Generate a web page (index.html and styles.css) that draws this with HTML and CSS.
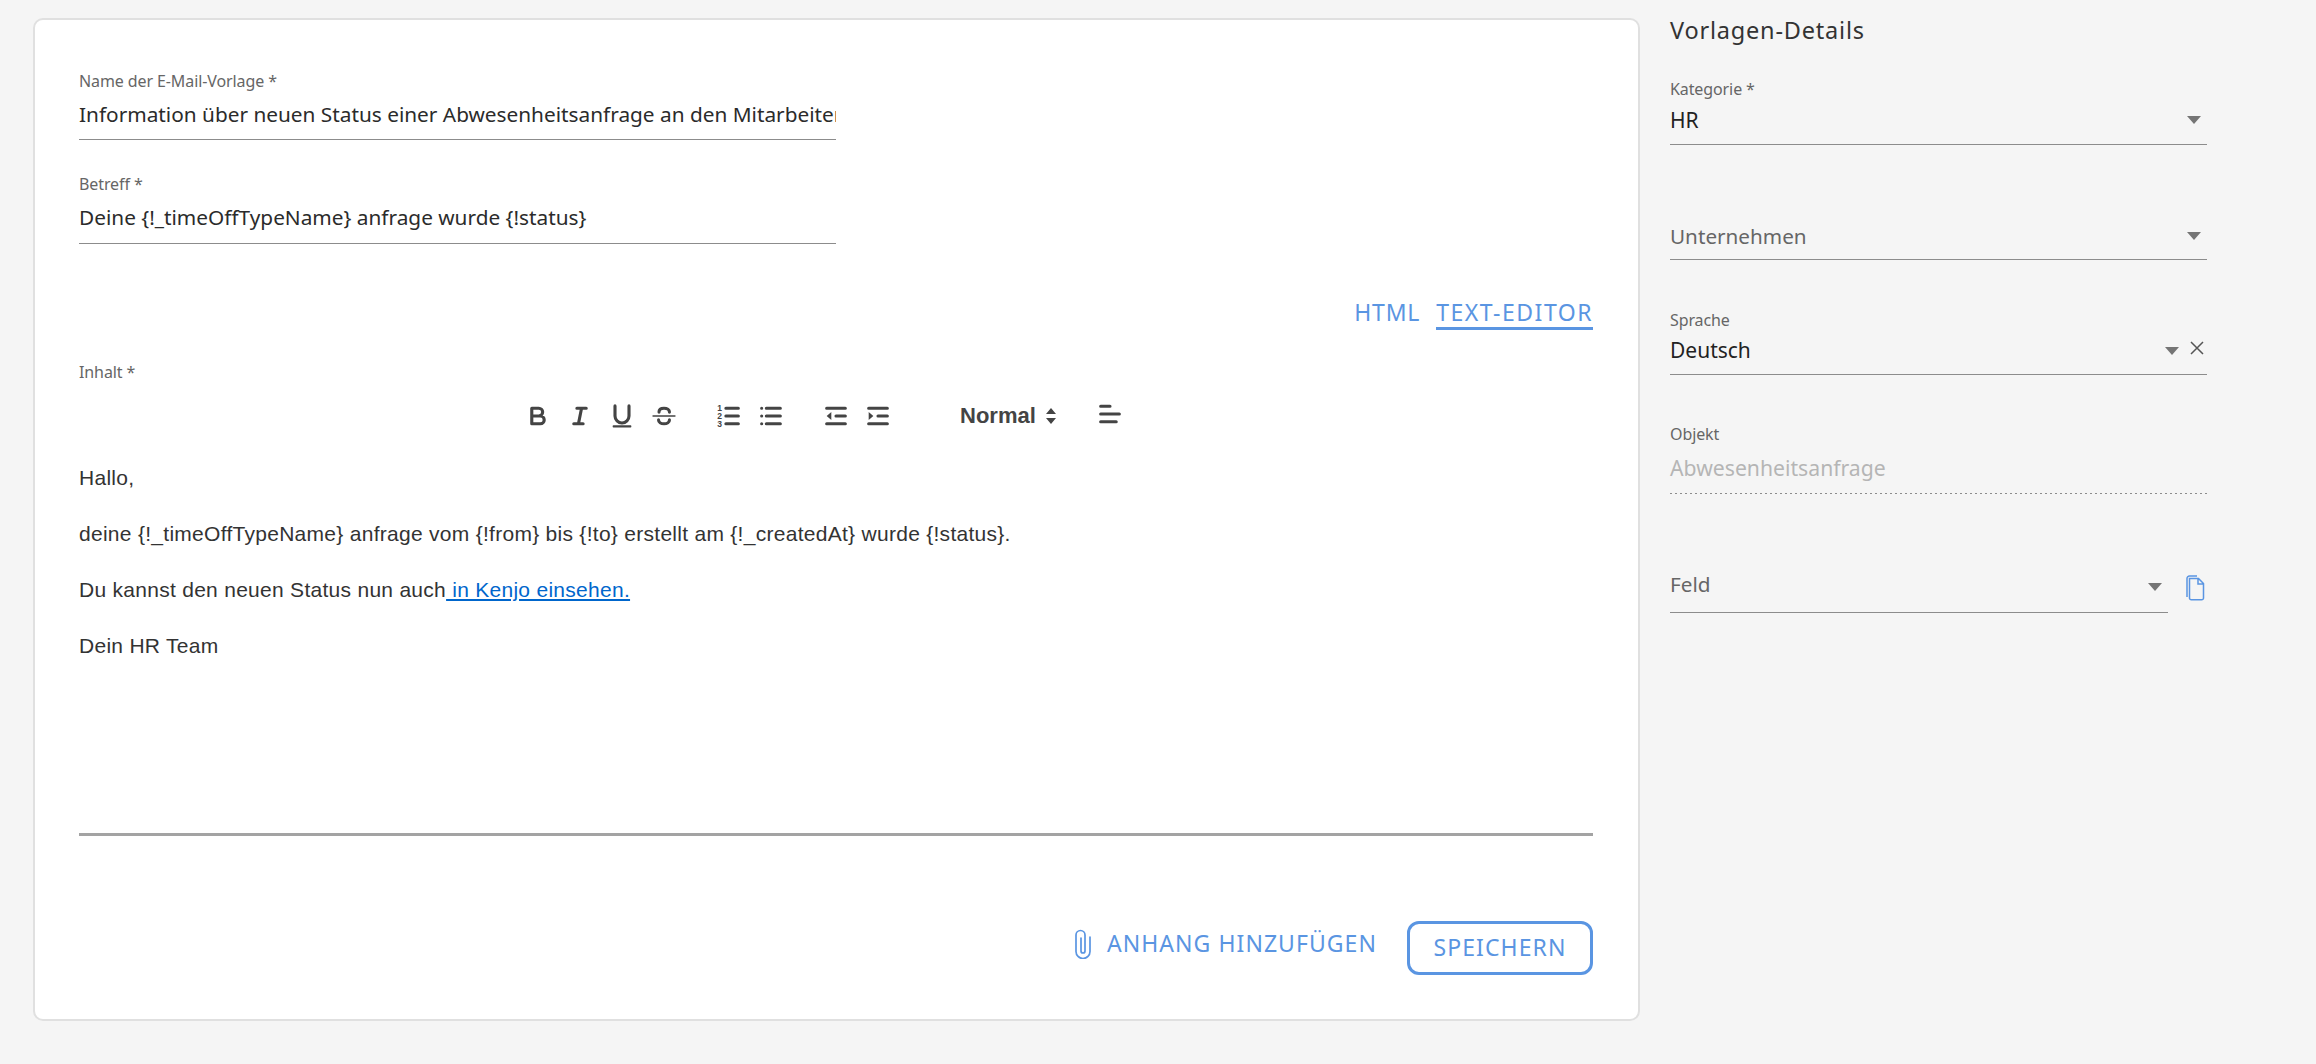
FILE: index.html
```html
<!DOCTYPE html>
<html lang="de">
<head>
<meta charset="utf-8">
<title>E-Mail-Vorlage</title>
<link rel="stylesheet" href="styles.css">
</head>
<body>
<main class="page">
  <section class="card">
    <div class="field field-name">
      <div class="label">Name der E-Mail-Vorlage *</div>
      <div class="value">Information über neuen Status einer Abwesenheitsanfrage an den Mitarbeiter</div>
    </div>
    <div class="field field-subject">
      <div class="label">Betreff *</div>
      <div class="value">Deine {!_timeOffTypeName} anfrage wurde {!status}</div>
    </div>
    <div class="tabs">
      <span class="tab tab-html">HTML</span>
      <span class="tab tab-active">TEXT-EDITOR</span>
    </div>
    <div class="label label-content">Inhalt *</div>
    <div class="toolbar">
      <div class="tool-group">
        <span class="tool"><svg viewBox="0 0 18 18"><path d="M5 4h4.500a2.500 2.500 0 0 1 0 5H5zM5 9h5.500a2.500 2.500 0 0 1 0 5H5z"/></svg></span>
        <span class="tool"><svg viewBox="0 0 18 18"><path d="M7 4h6M5 14h6M8 14l2-10"/></svg></span>
        <span class="tool"><svg viewBox="0 0 18 18"><path d="M4.500 2.500V9a4.500 4.500 0 0 0 9 0V2.500"/><rect class="fill" x="3" y="15" width="12" height="1.400" rx=".5"/></svg></span>
        <span class="tool"><svg viewBox="0 0 18 18"><path d="M12.500 6.500C12.500 5 11 4 9 4S5.800 5 5.800 6.500M5.500 11.500C5.500 13 7 14 9 14s3.500-1 3.500-2.500"/><path class="thin" d="M2 9h14"/></svg></span>
      </div>
      <div class="tool-group">
        <span class="tool"><svg viewBox="0 0 18 18"><path d="M7 4h8M7 9h8M7 14h8"/><text class="num" x="1.500" y="6">1</text><text class="num" x="1.500" y="11">2</text><text class="num" x="1.500" y="16">3</text></svg></span>
        <span class="tool"><svg viewBox="0 0 18 18"><path d="M6 4h9M6 9h9M6 14h9M3 4h0M3 9h0M3 14h0"/></svg></span>
      </div>
      <div class="tool-group">
        <span class="tool"><svg viewBox="0 0 18 18"><path d="M3 14h12M3 4h12M9 9h6"/><polygon class="fill" points="6 6.500 6 11.500 3 9"/></svg></span>
        <span class="tool"><svg viewBox="0 0 18 18"><path d="M3 14h12M3 4h12M9 9h6"/><polygon class="fill" points="3 6.500 3 11.500 6 9"/></svg></span>
      </div>
      <div class="format">
        <span>Normal</span>
        <svg class="format-arrows" viewBox="0 0 10 16"><path d="M5 0l5 6H0zM5 16l5-6H0z"/></svg>
      </div>
      <span class="tool tool-align"><svg viewBox="0 0 18 18"><path d="M3 4h6M3 9h12M3 14h10"/></svg></span>
    </div>
    <div class="editor">
      <p>Hallo,</p>
      <p>deine {!_timeOffTypeName} anfrage vom {!from} bis {!to} erstellt am {!_createdAt} wurde {!status}.</p>
      <p>Du kannst den neuen Status nun auch<a class="link" href="#"> in Kenjo einsehen.</a></p>
      <p>Dein HR Team</p>
    </div>
    <div class="actions">
      <span class="attach">
        <svg class="clip" viewBox="0 0 16 30"><path d="M15 8v14.500a7 7 0 0 1-14 0V6a4.500 4.500 0 0 1 9 0v16a2 2 0 0 1-4 0V9"/></svg>
        ANHANG HINZUFÜGEN
      </span>
      <span class="save">SPEICHERN</span>
    </div>
  </section>

  <aside class="side">
    <h2 class="side-title">Vorlagen-Details</h2>
    <div class="select sel-cat">
      <div class="label">Kategorie *</div>
      <div class="sel-row"><span class="value-plain">HR</span><i class="arrow"></i></div>
    </div>
    <div class="select sel-company">
      <div class="sel-row"><span class="placeholder">Unternehmen</span><i class="arrow"></i></div>
    </div>
    <div class="select sel-lang">
      <div class="label">Sprache</div>
      <div class="sel-row"><span class="value-plain">Deutsch</span><i class="arrow arrow-clear"></i>
        <svg class="clear" viewBox="0 0 16 14"><path d="M2 1l12 12M14 1L2 13"/></svg></div>
    </div>
    <div class="select-dotted sel-object">
      <div class="label">Objekt</div>
      <div class="sel-row"><span class="disabled">Abwesenheitsanfrage</span></div>
    </div>
    <div class="field-line">
      <div class="select sel-field">
        <div class="sel-row"><span class="placeholder">Feld</span><i class="arrow arrow-low"></i></div>
      </div>
      <svg class="copy" viewBox="0 0 21 26"><path d="M3 22V3.500A2.500 2.500 0 0 1 5.500 1H13"/><path d="M5.500 3.500h9l5 5V23a1.800 1.800 0 0 1-1.800 1.800H7.300A1.800 1.800 0 0 1 5.500 23zM14 3.500V9h5.500"/></svg>
    </div>
  </aside>
</main>
</body>
</html>
```

FILE: styles.css
```css
* { box-sizing: border-box; }
html, body { margin: 0; height: 100%; }
body {
  background: #f5f5f5;
  font-family: "Noto Sans", "Open Sans", sans-serif;
  color: #2b2b2b;
  overflow: hidden;
}
.page { display: flex; align-items: flex-start; height: 1064px; }

.card {
  width: 1607px;
  height: 1003px;
  margin: 18px 0 0 33px;
  padding: 0 45px 0 44px;
  background: #fff;
  border: 2px solid #e0e0e0;
  border-radius: 10px;
  display: flex;
  flex-direction: column;
}

.label { font-size: 16px; line-height: 20px; color: #666; letter-spacing: -.1px; }
.value {
  font-size: 20.800px;
  line-height: 28px;
  white-space: nowrap;
  overflow: hidden;
  color: #2b2b2b;
  margin-top: 9px;
}
.field {
  width: 757px;
  height: 70px;
  border-bottom: 1px solid #8c8c8c;
}
.field-name { margin-top: 51px; height: 69px; }
.field-subject { margin-top: 34px; }

.tabs { display: flex; justify-content: flex-end; gap: 16px; margin-top: 53px; height: 33px; }
.tab { font-size: 23px; line-height: 30px; color: #5a95e2; letter-spacing: 1.500px; }
.tab-html { letter-spacing: .8px; }
.tab-active { border-bottom: 3px solid #5a95e2; }

.label-content { margin-top: 32px; }

.toolbar { display: flex; align-items: center; height: 36px; margin: 16px 0 0 438px; }
.tool-group { display: flex; margin-right: 23px; }
.tool { display: flex; align-items: center; justify-content: center; width: 42px; height: 36px; }
.tool svg { display: block; width: 28px; height: 28px; }
.tool svg path {
  fill: none;
  stroke: #444;
  stroke-width: 2;
  stroke-linecap: round;
  stroke-linejoin: round;
}
.tool svg path.thin { stroke-width: 1; }
.tool svg .fill { fill: #444; stroke: none; }
.tool svg .num { font-family: "Liberation Sans", sans-serif; font-size: 5.500px; font-weight: 700; fill: #444; }
.format {
  display: flex;
  align-items: center;
  gap: 10px;
  margin-left: 38px;
  width: 129px;
  font-family: "Liberation Sans", sans-serif;
  font-weight: 700;
  font-size: 22px;
  color: #444;
}
.format-arrows { width: 10px; height: 16px; fill: #444; }
.tool-align { margin-top: -5px; }

.editor {
  height: 372px;
  margin-top: 30px;
  border-bottom: 3px solid #a3a3a3;
  font-family: "Liberation Sans", sans-serif;
  font-size: 21px;
  line-height: 28px;
  letter-spacing: .28px;
  color: #333;
}
.editor p { margin: 0 0 28px; }
.link { color: #06c; text-decoration: underline; }

.actions { display: flex; justify-content: flex-end; align-items: flex-start; margin-top: 85px; }
.attach {
  display: flex;
  align-items: center;
  gap: 16px;
  height: 44px;
  margin-right: 30px;
  font-size: 23px;
  letter-spacing: 1.050px;
  color: #5a95e2;
}
.clip { width: 16px; height: 30px; fill: none; stroke: #5a95e2; stroke-width: 1.700; stroke-linecap: round; margin-top: 2px; }
.save {
  display: flex;
  align-items: center;
  justify-content: center;
  width: 186px;
  height: 54px;
  padding-bottom: 2px;
  border: 3px solid #5a95e2;
  border-radius: 12px;
  font-size: 23px;
  letter-spacing: 1.100px;
  color: #5a95e2;
}

.side { width: 537px; margin-left: 30px; }
.side-title { margin: 14px 0 0; font-size: 23.500px; line-height: 32px; font-weight: 400; letter-spacing: .8px; color: #333; }
.select { border-bottom: 1px solid #8c8c8c; }
.sel-row { display: flex; align-items: center; height: 34px; }
.sel-cat { margin-top: 33px; height: 66px; }
.sel-cat .sel-row { height: 36px; margin-top: 3px; }
.sel-company { margin-top: 74px; height: 41px; }
.sel-lang { margin-top: 50px; height: 65px; }
.sel-lang .sel-row { margin-top: 3px; }
.select-dotted {
  background-image: linear-gradient(to right, #8c8c8c 0, #8c8c8c 33%, transparent 33%);
  background-size: 5px 1px;
  background-repeat: repeat-x;
  background-position: 0 100%;
}
.sel-object { margin-top: 49px; height: 70px; }
.sel-object .sel-row { margin-top: 6px; }
.value-plain { font-size: 21px; color: #222; }
.placeholder { font-size: 20.700px; color: #666; }
.disabled { font-size: 21.200px; color: #b5b5b5; }
.arrow {
  margin-left: auto;
  margin-right: 6px;
  width: 0;
  height: 0;
  border-left: 7px solid transparent;
  border-right: 7px solid transparent;
  border-top: 8px solid #757575;
}
.arrow-clear { margin-right: 10px; margin-top: 2px; }
.arrow-low { margin-top: 6px; }
.clear { width: 16px; height: 14px; margin: -4px 2px 0 0; fill: none; stroke: #555; stroke-width: 1.500; }
.field-line { display: flex; align-items: flex-start; margin-top: 78px; }
.sel-field { width: 498px; height: 41px; }
.sel-field .sel-row { height: 32px; margin-top: -4px; }
.copy { width: 21px; height: 26px; margin: 3px 0 0 16px; fill: none; stroke: #5a95e2; stroke-width: 1.500; }
```
